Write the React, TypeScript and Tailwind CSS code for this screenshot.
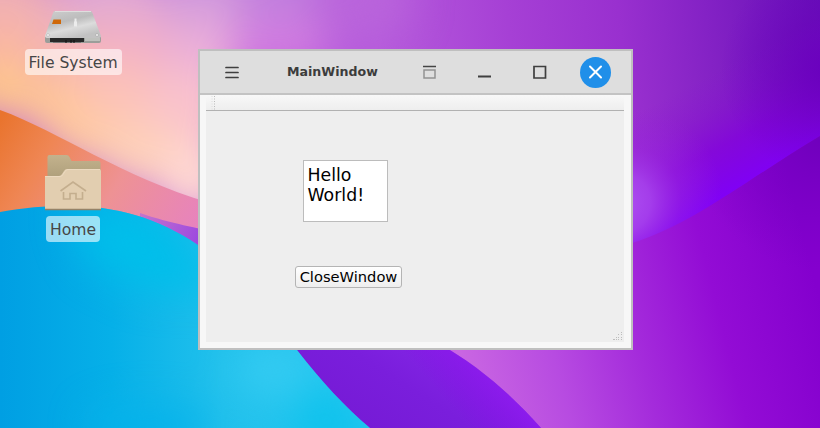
import React from "react";

/* Soft colour patches of the sky: x, y, rx, ry, fill */
const SKY_PATCHES: [number, number, number, number, string][] = [
  [0, 0, 60, 40, "#efb0b4"],
  [110, 0, 60, 40, "#e0a9d3"],
  [210, -5, 60, 35, "#d099dc"],
  [300, -5, 60, 40, "#c17fdd"],
  [360, 0, 50, 40, "#b964db"],
  [0, 45, 50, 25, "#fab6a2"],
  [70, 50, 40, 30, "#f6b6b4"],
  [140, 45, 45, 35, "#f1b0c8"],
  [205, 50, 40, 35, "#e9aeda"],
  [280, 45, 50, 25, "#d37de0"],
  [0, 90, 45, 30, "#ffc889"],
  [55, 105, 45, 30, "#ffc795"],
  [120, 95, 45, 35, "#fcc2b8"],
  [190, 110, 45, 45, "#f9c2cd"],
  [90, 140, 45, 25, "#ffcc9e"],
  [140, 155, 45, 35, "#fed1b8"],
  [195, 180, 40, 40, "#ffd9d2"],
];

function Wallpaper() {
  return (
    <svg className="absolute inset-0" width="820" height="428" viewBox="0 0 820 428" aria-hidden="true">
      <defs>
        <filter id="soft" filterUnits="userSpaceOnUse" x="-100" y="-100" width="1020" height="628" colorInterpolationFilters="sRGB">
          <feGaussianBlur stdDeviation="20" />
        </filter>
        <clipPath id="discClip">
          <path d="M0 212C80 198 142 207 198 245C235 270 260 303 297 350C322 382 345 407 370 428H0Z" />
        </clipPath>
        <linearGradient id="sky" gradientUnits="userSpaceOnUse" x1="380" y1="70" x2="820" y2="20">
          <stop offset="0" stopColor="#b65bdc" />
          <stop offset=".3" stopColor="#a640d5" />
          <stop offset=".55" stopColor="#9930cf" />
          <stop offset=".8" stopColor="#7e1ec2" />
          <stop offset="1" stopColor="#6510b4" />
        </linearGradient>
        <linearGradient id="orange" gradientUnits="userSpaceOnUse" x1="0" y1="120" x2="190" y2="235">
          <stop offset="0" stopColor="#e9742e" />
          <stop offset=".25" stopColor="#ef8654" />
          <stop offset=".6" stopColor="#ee9294" />
          <stop offset="1" stopColor="#e783bd" />
        </linearGradient>
        <linearGradient id="violet" gradientUnits="userSpaceOnUse" x1="370" y1="428" x2="430" y2="335">
          <stop offset="0" stopColor="#761bd6" />
          <stop offset=".5" stopColor="#7a1edc" />
          <stop offset="1" stopColor="#8426e6" />
        </linearGradient>
        <linearGradient id="violetRim" gradientUnits="userSpaceOnUse" x1="445" y1="400" x2="485" y2="365">
          <stop offset="0" stopColor="#8800e6" stopOpacity="0" />
          <stop offset="1" stopColor="#9018f0" stopOpacity=".7" />
        </linearGradient>
        <linearGradient id="sliver" gradientUnits="userSpaceOnUse" x1="140" y1="215" x2="200" y2="240">
          <stop offset="0" stopColor="#c474cc" />
          <stop offset="1" stopColor="#9c48e0" />
        </linearGradient>
        <linearGradient id="cyan" gradientUnits="userSpaceOnUse" x1="0" y1="310" x2="370" y2="310">
          <stop offset="0" stopColor="#009fe3" />
          <stop offset=".3" stopColor="#06b0e8" />
          <stop offset=".6" stopColor="#22c1ec" />
          <stop offset="1" stopColor="#2ac8f0" />
        </linearGradient>
        <linearGradient id="magenta" gradientUnits="userSpaceOnUse" x1="470" y1="390" x2="820" y2="300">
          <stop offset="0" stopColor="#c966e2" />
          <stop offset=".25" stopColor="#b74be1" />
          <stop offset=".48" stopColor="#a42bdb" />
          <stop offset=".72" stopColor="#930cd5" />
          <stop offset="1" stopColor="#8400ce" />
        </linearGradient>
        <radialGradient id="indigo" gradientUnits="userSpaceOnUse" cx="820" cy="140" r="130">
          <stop offset="0" stopColor="#7000bd" />
          <stop offset="1" stopColor="#7800c4" stopOpacity="0" />
        </radialGradient>
        <linearGradient id="edge" gradientUnits="userSpaceOnUse" x1="733" y1="192" x2="680" y2="90">
          <stop offset="0" stopColor="#8000f6" />
          <stop offset=".4" stopColor="#8400e0" stopOpacity=".75" />
          <stop offset=".7" stopColor="#8808d8" stopOpacity=".3" />
          <stop offset="1" stopColor="#8c10d8" stopOpacity="0" />
        </linearGradient>
        <radialGradient id="lilac" gradientUnits="userSpaceOnUse" cx="0" cy="0" r="1" gradientTransform="translate(620 205) rotate(-35) scale(105 95)">
          <stop offset="0" stopColor="#ae52f2" />
          <stop offset=".3" stopColor="#a946ec" stopOpacity=".85" />
          <stop offset=".6" stopColor="#a030e0" stopOpacity=".4" />
          <stop offset="1" stopColor="#9a25dc" stopOpacity="0" />
        </radialGradient>
        <radialGradient id="night" gradientUnits="userSpaceOnUse" cx="830" cy="70" r="110">
          <stop offset="0" stopColor="#6900bd" />
          <stop offset=".5" stopColor="#6c02be" stopOpacity=".5" />
          <stop offset="1" stopColor="#7000c8" stopOpacity="0" />
        </radialGradient>
      </defs>

      <rect width="820" height="428" fill="url(#sky)" />
      <g filter="url(#soft)">
        {SKY_PATCHES.map(([cx, cy, rx, ry, fill]) => (
          <ellipse key={`${cx}-${cy}`} cx={cx} cy={cy} rx={rx} ry={ry} fill={fill} />
        ))}
      </g>
      <rect x="500" width="320" height="330" fill="url(#edge)" />
      <rect x="500" width="320" height="330" fill="url(#night)" />
      <rect x="500" width="320" height="330" fill="url(#lilac)" />

      <path d="M400 320L632 243C690 226 745 181 820 136V428H400Z" fill="url(#magenta)" />
      <path d="M600 254L632 243C690 226 745 181 820 136V300H600Z" fill="url(#indigo)" />
      <path d="M0 110C60 132 120 176 210 203V280H0Z" fill="url(#orange)" />
      <path d="M140 213C160 220 178 224 210 231V270L140 230Z" fill="url(#sliver)" />
      <path d="M250 340H433C483 368 514 398 541 428H330Z" fill="url(#violet)" />
      <path d="M250 340H433C483 368 514 398 541 428H330Z" fill="url(#violetRim)" />
      <g clipPath="url(#discClip)">
        <rect y="180" width="400" height="248" fill="url(#cyan)" />
        <g filter="url(#soft)">
          <path d="M70 210L150 210L230 290L150 290L90 260Z" fill="#00bfea" />
          <ellipse cx="275" cy="370" rx="40" ry="25" fill="#36ccf2" />
          <path d="M320 375L390 448H280Z" fill="#0cc2ec" />
          <ellipse cx="150" cy="428" rx="60" ry="20" fill="#04b2ea" />
        </g>
      </g>
    </svg>
  );
}

function DriveIcon() {
  return (
    <svg width="58" height="36" viewBox="0 0 58 36" aria-hidden="true">
      <defs>
        <linearGradient id="metal" x1="0" y1="0" x2=".5" y2="1">
          <stop offset="0" stopColor="#cecece" />
          <stop offset=".45" stopColor="#bcbcbc" />
          <stop offset=".7" stopColor="#dcdcdc" />
          <stop offset="1" stopColor="#c2c2c2" />
        </linearGradient>
      </defs>
      <path d="M1 27h56v4q0 2-2 2H3q-2 0-2-2Z" fill="#9b9e9a" />
      <path d="M11 1h35q2 0 2.500 2L57 26q0 2-2 2H3q-2 0-2-2L9 3q.5-2 2-2Z" fill="url(#metal)" />
      <path d="M11 1.500h36" stroke="#dedede" />
      <path d="M6 28h34v4H6Z" fill="#292929" />
      <path d="M9 32.500h28" stroke="#777" />
      <path d="M22 30v3M27 30v3M30 30v3" stroke="#111" />
      <path d="M41 28h15v3H41Z" fill="#bfc1bd" />
      <path d="M9.500 9.500h7.500v4.500H8Z" fill="#cf6808" />
      <path d="M30.500 8.500h2v3h.5v5h-3v-5h.5Z" fill="#ececec" />
      <circle cx="4" cy="25" r="1.500" fill="#eee" stroke="#aaa" strokeWidth=".5" />
      <circle cx="53" cy="25" r="1.500" fill="#eee" stroke="#999" strokeWidth=".5" />
    </svg>
  );
}

function HomeFolderIcon() {
  return (
    <svg width="58" height="57" viewBox="0 0 58 57" aria-hidden="true">
      <defs>
        <linearGradient id="flap" x1="0" y1="0" x2="0" y2="1">
          <stop offset="0" stopColor="#c3b28d" />
          <stop offset="1" stopColor="#a99a76" />
        </linearGradient>
      </defs>
      <path d="M3.500 3q0-2 2-2h17q2 0 3 2l2 4h27q2 0 2 2V30h-53Z" fill="url(#flap)" />
      <path d="M1 22h14q2 0 3-2l2-3q1-2 3-2h32q2 0 2 2v38H1Z" fill="#e2ceb0" />
      <path d="M1 22.500h15q2 0 3-2l2-3q1-2 3-2h32" fill="none" stroke="#ecdac0" />
      <path d="M1 55.500h56" stroke="#948268" strokeWidth="1.500" />
      <path d="M16.500 37L29 28L42 37M19.500 38v7H26v-5.500h6V45h6.500v-7" fill="none" stroke="#c4ae8e" strokeWidth="1.600" />
    </svg>
  );
}

function WindowControls() {
  return (
    <div className="flex items-center">
      <svg width="15" height="15" viewBox="0 0 15 15" fill="none" aria-label="Shade">
        <path d="M1 1.500h13" stroke="#444" strokeWidth="1.500" />
        <path d="M2 5h11v8H2Z" stroke="#929292" strokeWidth="1.500" />
      </svg>
      <svg className="ml-10" width="15" height="15" viewBox="0 0 15 15" aria-label="Minimize">
        <path d="M1 11.500h13" stroke="#3f3f3f" strokeWidth="2" />
      </svg>
      <svg className="ml-10" width="15" height="15" viewBox="0 0 15 15" fill="none" aria-label="Maximize">
        <path d="M2 1.500h11.500V13H2Z" stroke="#3f3f3f" strokeWidth="1.700" />
      </svg>
      <button className="ml-[32.500px] flex size-[31px] items-center justify-center rounded-full bg-[#208fe9]" aria-label="Close">
        <svg width="15" height="15" viewBox="0 0 15 15">
          <path d="M2 1.500l11 11M13 1.500L2 12.500" stroke="white" strokeWidth="2" strokeLinecap="round" />
        </svg>
      </button>
    </div>
  );
}

export default function App() {
  return (
    <main className="relative h-[428px] w-[820px] overflow-hidden font-['DejaVu_Sans',sans-serif]">
      <Wallpaper />

      <div className="absolute top-[10px] left-[24px] flex w-[98px] flex-col items-center">
        <DriveIcon />
        <span className="mt-[3px] flex h-[26px] w-[97px] items-center justify-center rounded bg-white/60 pt-[3px] text-[15.600px] whitespace-nowrap text-[#464646]">File System</span>
      </div>

      <div className="absolute top-[154px] left-[44px] flex w-[58px] flex-col items-center">
        <HomeFolderIcon />
        <span className="mt-[5px] flex h-[26px] w-[54px] items-center justify-center rounded bg-white/60 pt-[3px] text-[15.600px] text-[#464646]">Home</span>
      </div>

      <section className="absolute top-[49px] left-[198px] flex h-[301px] w-[435px] flex-col border-2 border-[#bfbfbf] bg-[#f7f7f7]">
        <header className="flex h-[44px] shrink-0 items-center border-b-2 border-[#c3c3c3] bg-[#dedede] pl-6">
          <svg width="15" height="15" viewBox="0 0 15 15" aria-label="Menu">
            <path d="M2 2.500h12M2 7.500h12M2 12.500h12" stroke="#3f3f3f" strokeWidth="1.700" strokeLinecap="round" />
          </svg>
          <h1 className="ml-12 w-[91px] text-[12.600px] font-bold whitespace-nowrap text-[#3c3c3c]">MainWindow</h1>
          <div className="ml-[44px]">
            <WindowControls />
          </div>
        </header>

        <div className="mr-[7px] mb-[6px] ml-[6px] flex flex-1 flex-col bg-[#eeeeee]">
          <div className="flex h-4 shrink-0 items-center border-b border-[#b1b1b1] bg-linear-to-b from-[#f8f8f8] to-[#eeeeee] pl-[5px]">
            <svg width="5" height="14" viewBox="0 0 5 14" aria-hidden="true">
              <path d="M1 0v14" stroke="#dcdcdc" strokeDasharray="1 1.500" />
              <path d="M3.500 0v14" stroke="#bcbcbc" strokeDasharray="1 1.500" />
            </svg>
          </div>
          <div className="flex flex-1 flex-col items-start">
            <div className="mt-[49px] ml-[97px] h-[62px] w-[85px] border border-[#bcbcbc] bg-white pt-1 pl-[3.500px] text-[17.330px] leading-[20px] text-black">
              Hello
              <br />
              World!
            </div>
            <button className="mt-[44px] ml-[89px] flex h-[22px] w-[107px] items-center justify-center rounded-[3px] border border-[#b4b4b4] bg-linear-to-b from-white to-[#eeeeee] text-[14.670px] text-black">CloseWindow</button>
            <svg className="mt-auto mr-[1px] mb-[1px] self-end" width="10" height="10" viewBox="0 0 10 10" fill="#bdbdbd" aria-hidden="true">
              <path d="M8 1h1v1H8ZM5 3h1v1H5ZM8 3h1v1H8ZM3 6h1v1H3ZM5 6h1v1H5ZM8 6h1v1H8ZM0 8h2v1H0ZM3 8h1v1H3ZM5 8h1v1H5ZM8 8h1v1H8Z" />
            </svg>
          </div>
        </div>
      </section>
    </main>
  );
}
